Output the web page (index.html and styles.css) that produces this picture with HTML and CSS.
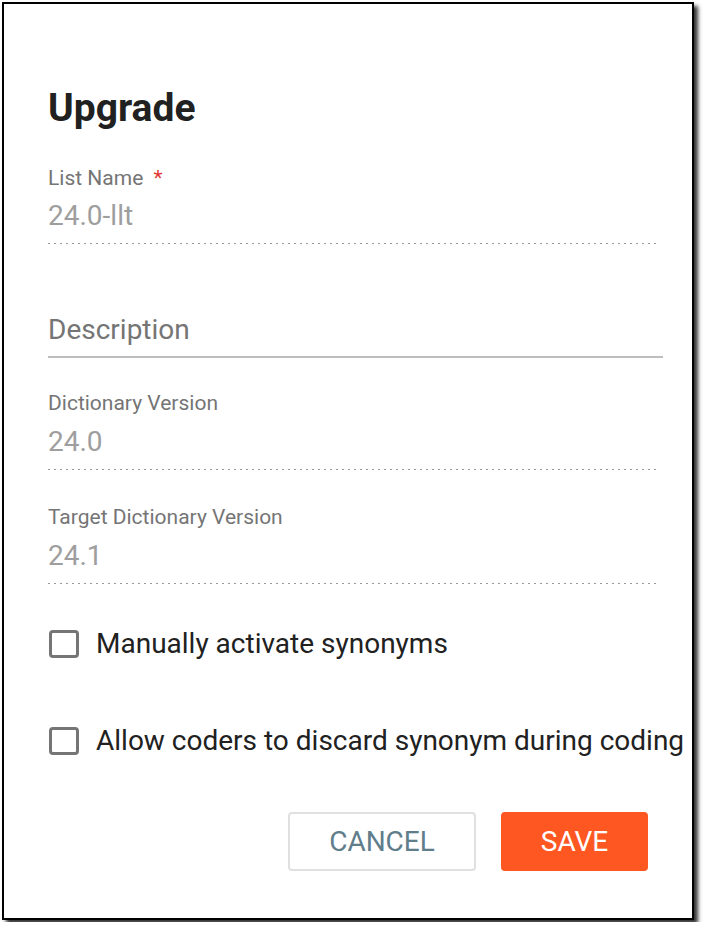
FILE: index.html
```html
<!DOCTYPE html>
<html lang="en">
<head>
  <meta charset="UTF-8">
  <title>Upgrade</title>
  <link rel="stylesheet" href="styles.css">
</head>
<body>

  <div class="dialog">
    <h1 class="dialog-title">Upgrade</h1>

    <div class="field">
      <div class="field-label">List Name <span class="required">*</span></div>
      <div class="field-value">24.0-llt</div>
    </div>

    <div class="field field-input">
      <div class="field-placeholder">Description</div>
    </div>

    <div class="field field-dict">
      <div class="field-label">Dictionary Version</div>
      <div class="field-value">24.0</div>
    </div>

    <div class="field field-target">
      <div class="field-label">Target Dictionary Version</div>
      <div class="field-value">24.1</div>
    </div>

    <label class="check check-first">
      <span class="check-box"></span>
      <span class="check-text">Manually activate synonyms</span>
    </label>

    <label class="check check-second">
      <span class="check-box"></span>
      <span class="check-text">Allow coders to discard synonym during coding</span>
    </label>

    <div class="actions">
      <button class="btn btn-cancel">CANCEL</button>
      <button class="btn btn-save">SAVE</button>
    </div>
  </div>

</body>
</html>
```

FILE: styles.css
```css
html, body {
  margin: 0;
  padding: 0;
  background: #fff;
  font-family: Roboto, 'Liberation Sans', sans-serif;
}

.dialog {
  box-sizing: border-box;
  width: 692px;
  height: 918px;
  margin: 2px;
  padding: 82px 29px 0 44px;
  border: 2px solid #000;
  background: #fff;
  box-shadow: 4px 4px 4px rgba(0, 0, 0, 0.8);
}

.dialog-title {
  margin: 0;
  font-size: 39px;
  line-height: 45px;
  font-weight: 700;
  color: #212121;
}

.field {
  margin-top: 35px;
}

.field-label {
  font-size: 21px;
  line-height: 24px;
  color: #757575;
}

.required {
  color: #e53935;
  margin-left: 5px;
}

.field-value {
  margin-top: 9px;
  margin-right: 3px;
  padding-bottom: 11px;
  font-size: 28px;
  line-height: 34px;
  color: #9e9e9e;
  background: linear-gradient(to right, #999 34%, transparent 0) left bottom / 6px 1px repeat-x;
}

.field-input {
  margin-top: 69px;
}

.field-placeholder {
  padding-bottom: 9px;
  font-size: 28px;
  line-height: 34px;
  color: #757575;
  border-bottom: 2px solid #bdbdbd;
}

.field-dict {
  margin-top: 33px;
}

.field-dict .field-value {
  margin-top: 10px;
}

.field-target {
  margin-top: 35px;
}

.field-target .field-value {
  margin-top: 10px;
}

.check {
  display: flex;
  align-items: center;
  gap: 17px;
  height: 34px;
  white-space: nowrap;
}

.check-first {
  margin-top: 43px;
}

.check-second {
  margin-top: 63px;
}

.check-box {
  box-sizing: border-box;
  flex: none;
  width: 30px;
  height: 28px;
  margin-left: 1px;
  border: 3px solid #757575;
  border-radius: 4px;
}

.check-text {
  font-size: 28px;
  line-height: 34px;
  color: #212121;
}

.actions {
  display: flex;
  justify-content: flex-end;
  gap: 25px;
  margin-top: 54px;
  margin-right: 15px;
}

.btn {
  box-sizing: border-box;
  height: 59px;
  border-radius: 4px;
  font-family: Roboto, 'Liberation Sans', sans-serif;
  font-size: 28px;
  cursor: pointer;
}

.btn-cancel {
  width: 188px;
  border: 2px solid #e0e0e0;
  background: #fff;
  color: #607d8b;
}

.btn-save {
  width: 147px;
  border: none;
  background: #ff5722;
  color: #fff;
}
```
